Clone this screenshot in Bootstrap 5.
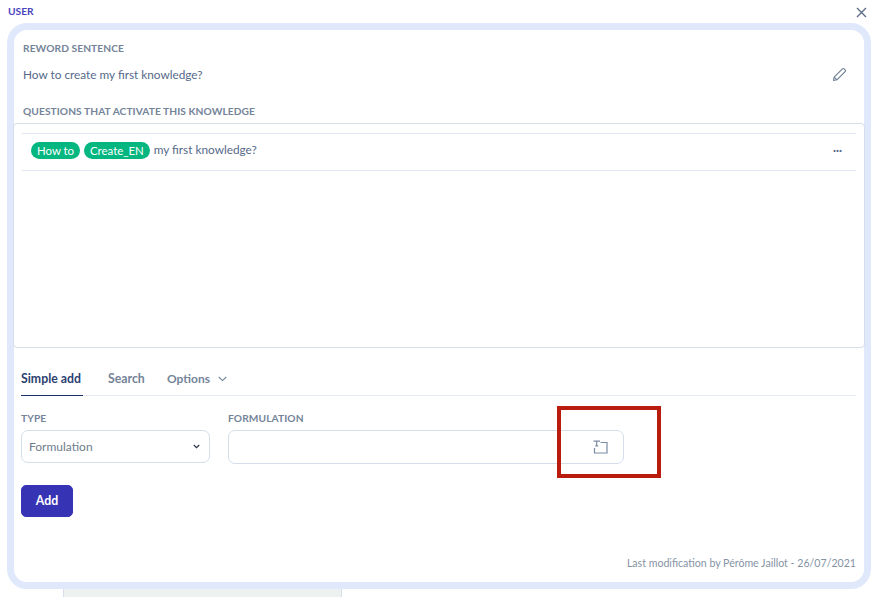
<!DOCTYPE html>
<html lang="en">
<head>
<meta charset="utf-8">
<title>User</title>
<link href="https://cdn.jsdelivr.net/npm/bootstrap@5.3.0/dist/css/bootstrap.min.css" rel="stylesheet">
<style>
html,body{height:597px;overflow:hidden;background:#fff}
body{font-family:"Lato","Liberation Sans",sans-serif;color:#55698a;font-size:11.8px;position:relative}
.topbar{height:23px;padding:4px 8px 0 8px;line-height:14px}
.title-user{font-size:10.2px;font-weight:700;color:#4a46bd}
.close-x{position:absolute;left:856px;top:7px;width:11px;height:11px;display:block}
.panel{margin:0 4px 0 7px;height:566px;border:7px solid #e0e9fb;border-radius:20px;background:#fff;position:relative;display:flex;flex-direction:column}
.panel-top{padding:11px 9px 0 9px}
.cap{font-size:10.2px;font-weight:700;letter-spacing:.08px;color:#748499;line-height:14px;text-transform:uppercase}
.reword{height:49px;padding-top:12px;line-height:16px}
.pencil{width:15px;height:15px;margin-right:8px}
.qbox{margin:5px -10px 0 -10px;height:225px;border:1px solid #d5deea;border-radius:4px;padding:9px 8px 0 8px}
.qrow{height:38px;border-top:1px solid #e1e7f3;border-bottom:1px solid #e1e7f3;padding:0 14px 4px 9px}
.tag-pill{background:#04b67f;color:#fff;border-radius:10px;line-height:17px;height:17px;padding:0 6px;margin-right:4px;font-size:11.4px}
.dots{font-size:11px;font-weight:700;color:#55698a;line-height:8px}
.tabs-row{margin:20px 8px 0 7px;height:28px;border-bottom:1px solid #e6ebf2}
.tab-item{height:28px;padding-top:2px;font-size:12.3px;font-weight:700;color:#748499;line-height:18px}
.tab-on{color:#2c4170;border-bottom:1px solid #1b2f6b;width:62px}
.tab-search{margin-left:25px;width:59px}
.tab-opt{padding-top:2px;width:70px;font-size:12px}
.chev{margin-top:6px}
.form-zone{margin:15px 8px 0 7px;gap:18px}
.fld-type{width:189px}
.fld-form{width:396px}
.fld-cap{font-size:10.2px;font-weight:700;letter-spacing:.1px;color:#748499;line-height:14px;margin-bottom:5px}
.sel-fake{height:33px;border:1px solid #d3deeb;border-radius:7px;padding:1px 9px 0 7px;color:#6f7c8c;font-size:12px}
.sel-fake svg{margin-top:-1px}
.inp-fake{height:34px;border:1px solid #d3deeb;border-radius:7px;padding-right:15px}
.add-btn{margin:21px 0 0 7px;width:52px;height:32px;background:#3733b5;border-color:#3733b5;border-radius:5px;color:#fff;font-size:12.3px;font-weight:700;padding:0}
.foot-note{margin-top:auto;padding:0 8px 12px 0;font-size:10.6px;color:#8593a5;line-height:14px;text-align:right}
.under-strip{margin-left:63px;width:279px;height:8px;background:#edf2f1;border:1px solid #d5deea;border-top:0;border-bottom:0}
.mark-red{position:absolute;left:557px;top:406px;width:104px;height:72px;border:4px solid #b91c0c;pointer-events:none}
</style>
</head>
<body>
<div class="topbar"><span class="title-user">USER</span></div>
<svg class="close-x" viewBox="0 0 11 11" fill="none" stroke="#5d6f87" stroke-width="1.4"><path d="M1 1l9 9M10 1l-9 9"/></svg>
<div class="panel">
  <div class="panel-top">
    <div class="cap">Reword sentence</div>
    <div class="reword d-flex justify-content-between align-items-start">
      <span>How to create my first knowledge?</span>
      <svg class="pencil" viewBox="0 0 15 15" fill="none" stroke="#6b7d94" stroke-width="1.1" stroke-linejoin="round"><path d="M1.5 13.5l.7-3.4L10.4 1.9a1.2 1.2 0 0 1 1.7 0l1 1a1.2 1.2 0 0 1 0 1.7L4.9 12.8z"/><path d="M2.2 10.1l2.7 2.7"/></svg>
    </div>
    <div class="cap">Questions that activate this knowledge</div>
    <div class="qbox">
      <div class="qrow d-flex align-items-center justify-content-between">
        <div class="d-flex align-items-center"><span class="tag-pill">How to</span><span class="tag-pill">Create_EN</span><span>my first knowledge?</span></div>
        <span class="dots">···</span>
      </div>
    </div>
  </div>
  <div class="tabs-row d-flex">
    <div class="tab-item tab-on">Simple add</div>
    <div class="tab-item tab-search">Search</div>
    <div class="tab-item tab-opt d-flex align-items-start gap-2">Options
      <svg class="chev" width="9" height="6" viewBox="0 0 9 6" fill="none" stroke="#748499" stroke-width="1.1"><path d="M.7 1l3.8 3.6L8.3 1"/></svg>
    </div>
  </div>
  <div class="form-zone d-flex">
    <div class="fld-type">
      <div class="fld-cap">TYPE</div>
      <div class="sel-fake d-flex align-items-center justify-content-between">Formulation
        <svg width="7" height="5" viewBox="0 0 7 5" fill="none" stroke="#2f3a4c" stroke-width="1.3"><path d="M.8 1l2.7 2.7L6.2 1"/></svg>
      </div>
    </div>
    <div class="fld-form">
      <div class="fld-cap">FORMULATION</div>
      <div class="inp-fake d-flex align-items-center justify-content-end">
        <svg width="15" height="14" viewBox="0 0 15 14" fill="none" stroke="#7c8ca2" stroke-width="1.2"><path d="M7.5 2.5h6.5v10.5H1.5V8"/><path d="M.5 1.2h6.5M3.7 1.2v4.6M2.2 5.8h3"/></svg>
      </div>
    </div>
  </div>
  <div><button type="button" class="btn add-btn">Add</button></div>
  <div class="foot-note">Last modification by Pérôme Jaillot - 26/07/2021</div>
</div>
<div class="under-strip"></div>
<div class="mark-red"></div>
</body>
</html>
